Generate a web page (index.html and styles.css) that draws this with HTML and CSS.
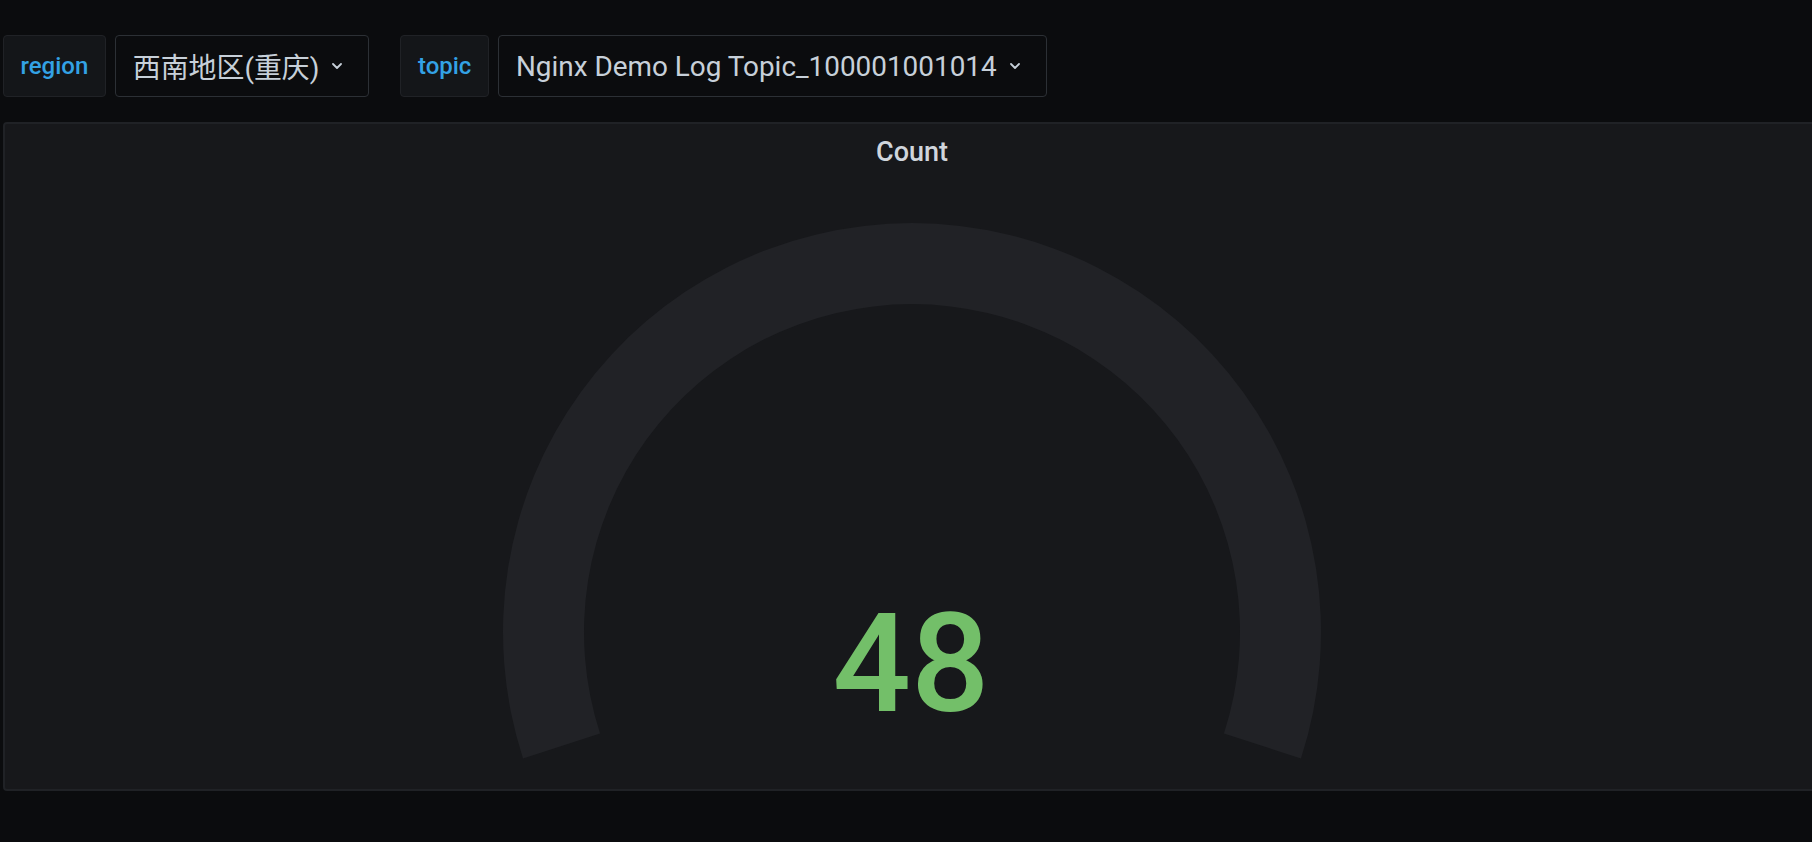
FILE: index.html
```html
<!DOCTYPE html>
<html lang="en">
<head>
  <meta charset="UTF-8" />
  <meta name="viewport" content="width=device-width, initial-scale=1.0"/>
  <title>Count</title>
  <link rel="stylesheet" href="styles.css">
</head>
<body>

  <div class="submenu">
    <div class="var-item">
      <span class="var-label">region</span>
      <div class="var-picker">
        <span class="var-value">西南地区(重庆)</span>
        <svg class="caret" width="10" height="6" viewBox="0 0 10 6"><path d="M1 1l4 4 4-4" fill="none" stroke="#c7d0d9" stroke-width="1.8" stroke-linecap="round" stroke-linejoin="round"/></svg>
      </div>
    </div>
    <div class="var-item">
      <span class="var-label">topic</span>
      <div class="var-picker">
        <span class="var-value">Nginx Demo Log Topic_100001001014</span>
        <svg class="caret" width="10" height="6" viewBox="0 0 10 6"><path d="M1 1l4 4 4-4" fill="none" stroke="#c7d0d9" stroke-width="1.8" stroke-linecap="round" stroke-linejoin="round"/></svg>
      </div>
    </div>
  </div>

  <div class="panel">
    <div class="panel-title">Count</div>
    <svg class="gauge" width="1814" height="621" viewBox="0 0 1814 621">
      <!-- background track, 216 degrees -->
      <path d="M 518.02 590.49 A 409 409 0 1 1 1295.98 590.49 L 1218.95 565.46 A 328 328 0 1 0 595.05 565.46 Z" fill="#212226"/>
      <text class="gauge-value" x="906" y="543" text-anchor="middle">48</text>
    </svg>
  </div>

</body>
</html>
```

FILE: styles.css
```css
body {
  margin: 0;
  padding: 0;
  font-family: Roboto, "Noto Sans CJK SC", sans-serif;
  background-color: #0b0c0e;
  color: #c7d0d9;
  overflow: hidden;
}

.submenu {
  display: flex;
  gap: 31px;
  padding: 35px 0 0 3px;
}

.var-item {
  display: flex;
  gap: 9px;
}

.var-label {
  display: flex;
  align-items: center;
  height: 60px;
  padding: 0 16.5px;
  background-color: #141619;
  border: 1px solid #202226;
  border-radius: 4px;
  color: #33a2e5;
  font-size: 24px;
  font-weight: 500;
}

.var-picker {
  display: flex;
  align-items: center;
  height: 60px;
  padding: 0 26px 0 17px;
  background-color: #0b0c0e;
  border: 1px solid #2c3035;
  border-radius: 4px;
  font-size: 27.9px;
}

.caret {
  margin-left: 13px;
}

.panel {
  display: flex;
  flex-direction: column;
  align-items: center;
  width: 1814px;
  height: 665px;
  margin: 25px 0 0 3px;
  background-color: #17181b;
  border: 2px solid #202226;
  border-radius: 4px;
}

.panel-title {
  padding-top: 12px;
  height: 32px;
  line-height: 32px;
  font-size: 27px;
  font-weight: 500;
  color: #d0d5dc;
}

.gauge {
  display: block;
}

.gauge-value {
  font-family: Roboto, sans-serif;
  font-size: 138px;
  font-weight: 500;
  fill: #73bf69;
}
```
